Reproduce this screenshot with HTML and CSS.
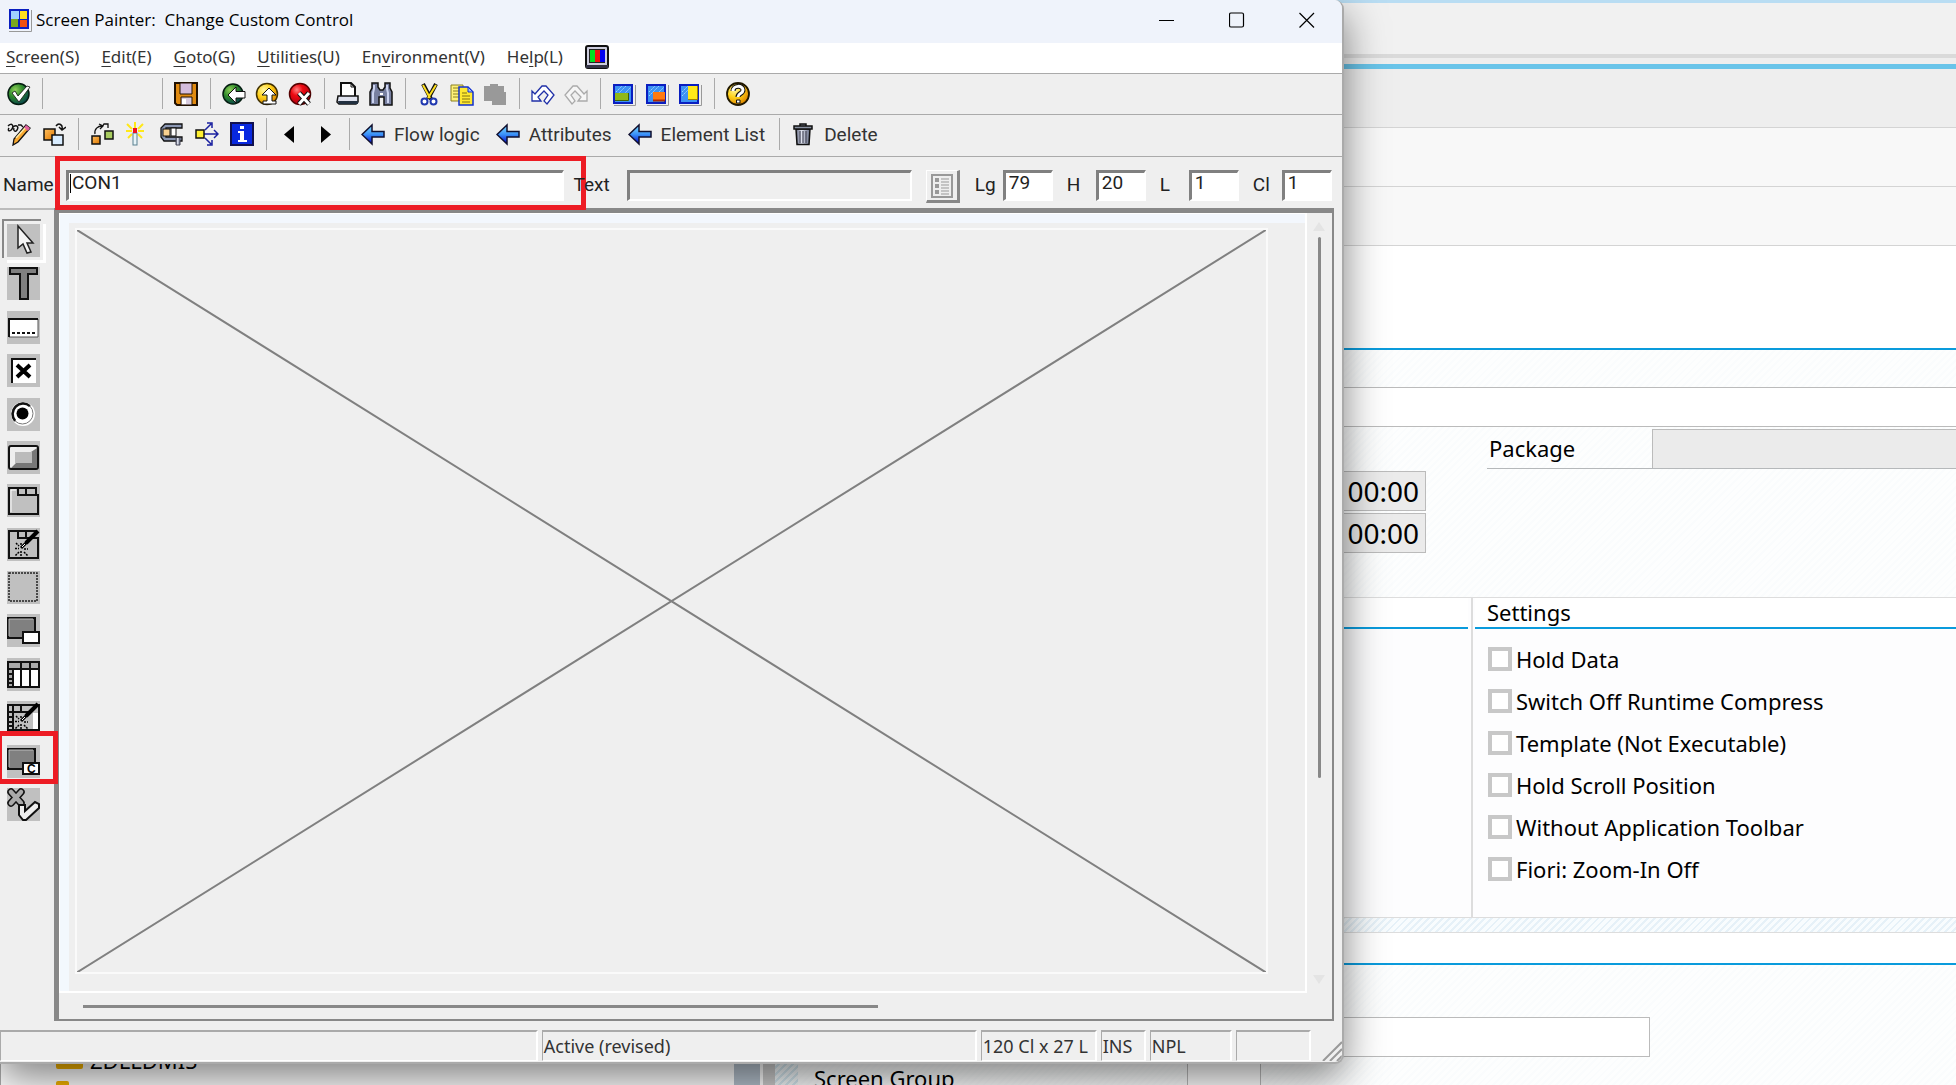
FILE: index.html
```html
<!DOCTYPE html>
<html lang="en">
<head>
<meta charset="utf-8">
<title>Screen Painter: Change Custom Control</title>
<link rel="stylesheet" href="styles.css">
</head>
<body>
<svg class="defs" aria-hidden="true">
  <defs>
    <radialGradient id="green" cx=".35" cy=".3" r=".7"><stop offset="0" stop-color="#8fd05a"/><stop offset=".5" stop-color="#2f8a2a"/><stop offset="1" stop-color="#0b4a4a"/></radialGradient>
    <radialGradient id="amber" cx=".35" cy=".3" r=".7"><stop offset="0" stop-color="#fff6a0"/><stop offset=".5" stop-color="#ffd21a"/><stop offset="1" stop-color="#e08a00"/></radialGradient>
    <radialGradient id="red" cx=".35" cy=".3" r=".7"><stop offset="0" stop-color="#ff8080"/><stop offset=".4" stop-color="#ee0a12"/><stop offset="1" stop-color="#b00010"/></radialGradient>
    <linearGradient id="blue" x1="0" y1="0" x2="0" y2="1"><stop offset="0" stop-color="#7fe0ff"/><stop offset=".5" stop-color="#3a90f8"/><stop offset="1" stop-color="#0000c8"/></linearGradient>
    <linearGradient id="orange" x1="0" y1="0" x2="1" y2="1"><stop offset="0" stop-color="#ffc060"/><stop offset="1" stop-color="#e07800"/></linearGradient>
    <linearGradient id="steel"><stop offset="0" stop-color="#5a6078"/><stop offset=".4" stop-color="#e0e4f0"/><stop offset="1" stop-color="#606880"/></linearGradient>
    <symbol id="arrow" viewBox="0 0 24 24"><path d="M1 12.500 11 3v6.500h12v5.500H11v7z" fill="url(#blue)" stroke="#101030" stroke-width="1.500"/></symbol>
    <symbol id="panel" viewBox="0 0 24 24"><path d="M2 23.500h21.500V3" fill="none" stroke="#999"/><rect x="1" y="2" width="20" height="20" fill="#0a1ec0"/><rect x="3" y="4" width="16" height="16" fill="#3c92f4"/><path d="M4 10 10 4M4 14 14 4M10 14l9-9" stroke="#a0d4ff" stroke-dasharray="2 1"/></symbol>
    <symbol id="wand" viewBox="0 0 33 33"><path d="M19 15 31 3" stroke="#000" stroke-width="4"/><path d="M14 20l6-6" stroke="#000" stroke-width="3"/><path d="m15 19 3-3" stroke="#fff"/><path d="M14 15v3M14 23v5M8 20.500h4M17 21h4M9 15l3 3M17 24l4 4M12 24l-4 4" stroke="#000" stroke-width="1.500" stroke-dasharray="2 1"/></symbol>
  </defs>
</svg>

<div class="desktop">
  <main class="backdrop">
    <div class="bar accent"></div>
    <div class="bar session"></div>
    <div class="bar ruler"></div>
    <div class="bar title-line"></div>
    <div class="bar tools dark"></div>
    <div class="bar tools"></div>
    <div class="bar tools"></div>
    <div class="work">
      <ul class="tree">
        <li><svg width="8" height="8" viewBox="0 0 8 8"><path d="M0 8h7V0z" fill="#555"/></svg><span class="folder"></span>ZDLLDMIS</li>
        <li><svg width="8" height="8"></svg><span class="folder small"></span></li>
      </ul>
      <div class="splitter"></div>
      <div class="groove"></div>
      <div class="hatch-col"></div>
      <section class="details">
        <div class="blank"></div>
        <div class="strip hatch"></div>
        <div class="strip"></div>
        <div class="columns attributes hatch">
          <div class="times">
            <input type="text" value="00:00" aria-label="Created time" readonly>
            <input type="text" value="00:00" aria-label="Changed time" readonly>
          </div>
          <div class="package">
            <label for="package">Package</label>
            <input type="text" id="package" readonly>
          </div>
        </div>
        <div class="columns groups">
          <section class="group left"><h2></h2></section>
          <section class="group right">
            <h2>Settings</h2>
            <div class="checks">
              <label><input type="checkbox">Hold Data</label>
              <label><input type="checkbox">Switch Off Runtime Compress</label>
              <label><input type="checkbox">Template (Not Executable)</label>
              <label><input type="checkbox">Hold Scroll Position</label>
              <label><input type="checkbox">Without Application Toolbar</label>
              <label><input type="checkbox">Fiori: Zoom-In Off</label>
            </div>
          </section>
        </div>
        <div class="divider"></div>
        <div class="subhead"></div>
        <div class="other hatch">
          <div class="entry"><label for="next">Next Screen</label><input id="next" class="long" type="text"></div>
          <div class="entry"><label for="grp">Screen Group</label><input id="grp" class="short" type="text"></div>
        </div>
      </section>
    </div>
  </main>

  <div class="window">
    <header class="titlebar">
      <svg width="24" height="24" viewBox="0 0 24 24"><path d="M1 23.500h22.500V2" fill="none" stroke="#999"/><rect x="1" y="1" width="20" height="20" fill="#0a1ec0"/><rect x="3" y="3" width="8" height="8" fill="#9fd0ff"/><rect x="12" y="3" width="7" height="8" fill="#ffe020"/><rect x="3" y="11" width="7" height="8" fill="#7aa820"/><rect x="12" y="12" width="7" height="7" fill="#f05010"/></svg>
      <h1>Screen Painter:&nbsp; Change Custom Control</h1>
      <div class="controls">
        <button type="button" aria-label="Minimize"><svg width="16" height="16"><path d="M0 8.500h15" stroke="#000"/></svg></button>
        <button type="button" aria-label="Maximize"><svg width="16" height="16"><rect x=".5" y="1" width="14" height="14" rx="1.500" fill="none" stroke="#000" stroke-width="1.200"/></svg></button>
        <button type="button" aria-label="Close"><svg width="16" height="16"><path d="m.5 1 14.500 14.500M15 1 .5 15.500" stroke="#000" stroke-width="1.200"/></svg></button>
      </div>
    </header>
    <nav class="menubar">
      <button type="button"><u>S</u>creen(S)</button>
      <button type="button"><u>E</u>dit(E)</button>
      <button type="button"><u>G</u>oto(G)</button>
      <button type="button"><u>U</u>tilities(U)</button>
      <button type="button">En<u>v</u>ironment(V)</button>
      <button type="button">He<u>l</u>p(L)</button>
      <svg width="24" height="24" viewBox="0 0 24 24"><rect x="1" y="1" width="22" height="22" rx="2" fill="#ccd" stroke="#111" stroke-width="2"/><path d="M1 20h22v3H1z" fill="#334"/><rect x="4" y="4" width="16" height="14" fill="#222"/><rect x="5" y="5" width="6" height="12" fill="#00e020"/><rect x="10" y="5" width="6" height="12" fill="#f01010"/><rect x="15" y="5" width="5" height="12" fill="#0000f0"/></svg>
    </nav>

    <div class="toolbar">
      <div class="group-tools first">
        <button type="button" aria-label="Enter"><svg viewBox="0 0 24 24"><circle cx="11.500" cy="12" r="10.500" fill="url(#green)" stroke="#041c10" stroke-width="1.500"/><path d="m5 11 3-2 3 5 9-10 3 1-11 15z" fill="#fff" stroke="#111" stroke-width=".8"/></svg></button>
      </div>
      <div class="group-tools command"></div>
      <div class="group-tools">
        <button type="button" aria-label="Save"><svg viewBox="0 0 24 24"><path d="M1 1h22v22H3l-2-2z" fill="#e08a10" stroke="#201000" stroke-width="2"/><path d="M6 1h12v11H6z" fill="#d4bcdc" stroke="#201000"/><path d="M7 15h11v8H7z" fill="#d8cce0" stroke="#201000"/><path d="M8 17h4v5H8z" fill="#fff"/></svg></button>
      </div>
      <div class="group-tools">
        <button type="button" aria-label="Back"><svg viewBox="0 0 24 24"><circle cx="11" cy="12" r="10" fill="url(#green)" stroke="#041c10" stroke-width="1.500"/><path d="M6 13 14 5v4.500h9v6.500h-9v5z" fill="#fff" stroke="#111"/></svg></button>
        <button type="button" aria-label="Exit"><svg viewBox="0 0 24 24"><circle cx="12" cy="12" r="10.500" fill="url(#amber)" stroke="#403000" stroke-width="1.500"/><path d="M14 6l7 7h-4v6h4v3H8v-3h4v-6H7z" fill="#fff" stroke="#111"/></svg></button>
        <button type="button" aria-label="Cancel"><svg viewBox="0 0 24 24"><circle cx="12" cy="12" r="10.500" fill="url(#red)" stroke="#500" stroke-width="1.500"/><path d="m11 11 10 11M21 11 11 22" stroke="#111" stroke-width="5"/><path d="m11 11 10 11M21 11 11 22" stroke="#fff" stroke-width="3"/></svg></button>
      </div>
      <div class="group-tools">
        <button type="button" aria-label="Print"><svg viewBox="0 0 24 24"><path d="M5 14V1h10l4 4v9" fill="#fff" stroke="#111" stroke-width="2"/><path d="M15 1v4h4" fill="none" stroke="#111"/><path d="M2 14h20v6l-2 2H3l-2-2z" fill="#dfe2ee" stroke="#111" stroke-width="1.500"/><path d="M2 19h20v3H3z" fill="#223040"/></svg></button>
        <button type="button" aria-label="Find"><svg viewBox="0 0 24 24"><path d="M3 1h6v4l2 3h3l2-3V1h5v5l2 4v13h-8v-8h-5v8H1V10l2-4z" fill="#7880a0" stroke="#111" stroke-width="1.500"/><path d="M5 3v4L4 11v10M18 3v4l1 4v10" fill="none" stroke="#ccd4f0" stroke-width="2"/><path d="M11 11h3v2h-3z" fill="#fff"/></svg></button>
      </div>
      <div class="group-tools">
        <button type="button" aria-label="Cut"><svg viewBox="0 0 24 24"><path d="m6 2 8 15M19 2l-8 15" stroke="#111" stroke-width="4"/><path d="m6 3 7 13M19 3l-8 13" stroke="#ffe020" stroke-width="2"/><circle cx="7.500" cy="19.500" r="3" fill="#fff" stroke="#2038b0" stroke-width="2"/><circle cx="16.500" cy="19.500" r="3" fill="#fff" stroke="#2038b0" stroke-width="2"/></svg></button>
        <button type="button" aria-label="Copy"><svg viewBox="0 0 24 24"><path d="M1 3h12v16H1z" fill="#fff27a" stroke="#8a8020"/><path d="M3 6h6M3 9h6M3 12h6M3 15h6" stroke="#8a8020"/><path d="M9 5h9l5 5v13H9z" fill="#ffe830" stroke="#1030d0" stroke-width="1.500"/><path d="M18 5v5h5z" fill="#a0b8ff" stroke="#1030d0"/><path d="M12 11h5M12 14h8M12 17h8M12 20h8" stroke="#807010"/></svg></button>
        <button type="button" aria-label="Paste" disabled><svg viewBox="0 0 24 24"><path d="M2 4h5V2h8v2h6v6h2v13H9v-4H1V4z" fill="#999"/></svg></button>
      </div>
      <div class="group-tools">
        <button type="button" aria-label="Undo"><svg viewBox="0 0 24 24"><path d="M1 19V9l3 3 7-8h4l8 9-7 9-3-3 4-6-4-4-6 6 3 4z" fill="#fff" stroke="#2030a8" stroke-width="1.300"/></svg></button>
        <button type="button" aria-label="Redo" disabled><svg viewBox="0 0 24 24"><path d="M23 19V9l-3 3-7-8H9L1 13l7 9 3-3-4-6 4-4 6 6-3 4z" fill="#f6f6f6" stroke="#aaa" stroke-width="1.300"/></svg></button>
      </div>
      <div class="group-tools">
        <button type="button" aria-label="Screen layout"><svg viewBox="0 0 24 24"><use href="#panel"/><path d="M3 11h13v8H3z" fill="#90b818"/><path d="M3 18.500h13.500V11" stroke="#406000" fill="none"/></svg></button>
        <button type="button" aria-label="Dialog layout"><svg viewBox="0 0 24 24"><use href="#panel"/><path d="M8 10h12v9H8z" fill="#ff7a10"/><path d="M8 18.500h12" stroke="#b02800" stroke-width="2"/></svg></button>
        <button type="button" aria-label="Side layout"><svg viewBox="0 0 24 24"><use href="#panel"/><path d="M10 4h9v13h-9z" fill="#ffe818"/><path d="M10 17.500h9.500V4" stroke="#a08000" fill="none"/></svg></button>
      </div>
      <div class="group-tools">
        <button type="button" aria-label="Help"><svg viewBox="0 0 24 24"><circle cx="12" cy="12" r="11" fill="url(#amber)" stroke="#201800" stroke-width="1.800"/><path d="M7 9c0-6 10-6 10-1 0 4-5 3-5 7" fill="none" stroke="#111" stroke-width="5"/><path d="M7 9c0-6 10-6 10-1 0 4-5 3-5 7" fill="none" stroke="#fff" stroke-width="3"/><path d="M10.500 18h3.500v3h-3.500z" fill="#fff" stroke="#111"/></svg></button>
      </div>
    </div>

    <div class="toolbar second">
      <div class="group-tools first">
        <button type="button" aria-label="Display and change"><svg viewBox="0 0 24 24"><path d="M1 4c4-4 6 0 4 3S0 9 2 6M6 5c4-3 6 0 4 3S6 8 7 6M11 3h3l2 2" fill="none" stroke="#111" stroke-width="1.400"/><path d="M19 3l4 3L11 20l-5 3 1-6z" fill="#f8a830" stroke="#111" stroke-width="1.300"/><path d="m19 3 4 3-2 3-4-3z" fill="#e060a0"/><path d="m9 16 9-10" stroke="#ffe8a0" stroke-width="1.500"/></svg></button>
        <button type="button" aria-label="Other object"><svg viewBox="0 0 24 24"><rect x="2" y="7" width="11" height="11" fill="url(#orange)" stroke="#111" stroke-width="1.500"/><rect x="10" y="13" width="11" height="10" fill="#d8ecff" stroke="#111" stroke-width="1.500"/><path d="M14 4c3-4 7-1 6 3m-3-2 3 3 4-3" fill="none" stroke="#111" stroke-width="1.500"/></svg></button>
      </div>
      <div class="group-tools">
        <button type="button" aria-label="Check"><svg viewBox="0 0 24 24"><rect x="2" y="14" width="8" height="8" fill="url(#orange)" stroke="#111" stroke-width="1.500"/><rect x="15" y="9" width="8" height="8" fill="#a8cc60" stroke="#111" stroke-width="1.500"/><path d="M5 12C4 7 8 4 12 4M9 2l4 2-3 3M18 6V2h-4l-2 3" fill="none" stroke="#111" stroke-width="1.300"/></svg></button>
        <button type="button" aria-label="Activate"><svg viewBox="0 0 24 24"><path d="M10 0v6M2 2l5 5M18 2l-5 5M1 9h6M13 9h6M3 16l4-4M17 16l-4-4" stroke="#ffe818" stroke-width="2"/><rect x="8" y="11" width="4" height="12" fill="#e8f4f8" stroke="#5a8090"/><rect x="8" y="6" width="4" height="5" fill="#f01020"/></svg></button>
        <button type="button" aria-label="Test"><svg viewBox="0 0 24 24"><path d="M5 2h17v4H6v9h16v4H4l-3-4V6z" fill="#8c98b4" stroke="#111" stroke-width="1.300"/><rect x="3" y="7" width="7" height="7" fill="#f8d090" stroke="#111"/><rect x="11" y="6" width="5" height="8" fill="#fff" stroke="#111"/><path d="M16 16v7h4v-7" fill="url(#steel)" stroke="#445"/></svg></button>
        <button type="button" aria-label="Where used"><svg viewBox="0 0 24 24"><path d="M8 12h15M10 8l6-6M10 16l6 6M19 8l4 4-4 4M12 1h5v5M12 23h5v-5" fill="none" stroke="#1a20a0" stroke-width="1.500"/><rect x="1" y="8" width="8" height="8" fill="#fff030" stroke="#111" stroke-width="1.500"/></svg></button>
        <button type="button" aria-label="Information"><svg viewBox="0 0 24 24"><rect x="1" y="1" width="22" height="22" fill="#0828e0" stroke="#101050" stroke-width="2"/><path d="M10 4h4v3h-4zM8 9h6v9h3v2H8v-2h2v-7H8z" fill="#fff"/></svg></button>
      </div>
      <div class="group-tools">
        <button type="button" aria-label="Previous"><svg viewBox="0 0 24 24"><path d="M16 4v17L6 12.500z"/></svg></button>
        <button type="button" aria-label="Next"><svg viewBox="0 0 24 24"><path d="M8 4v17l10-8.500z"/></svg></button>
      </div>
      <div class="group-tools labelled">
        <button type="button"><svg viewBox="0 0 24 24"><use href="#arrow"/></svg>Flow logic</button>
        <button type="button"><svg viewBox="0 0 24 24"><use href="#arrow"/></svg>Attributes</button>
        <button type="button"><svg viewBox="0 0 24 24"><use href="#arrow"/></svg>Element List</button>
      </div>
      <div class="group-tools labelled">
        <button type="button"><svg viewBox="0 0 24 24"><path d="M5 7h14l-1 15.500H6z" fill="url(#steel)" stroke="#111" stroke-width="1.500"/><path d="M9 9v12M12 9v12M15 9v12" stroke="#334"/><path d="M3 4h18v3H3zM9 4V2h6v2" fill="#8890a0" stroke="#111" stroke-width="1.500"/></svg>Delete</button>
      </div>
    </div>

    <div class="fields">
      <div class="field name">
        <label for="name">Name</label><input id="name" type="text" value="CON1">
        <span class="caret"></span><span class="mark"></span>
      </div>
      <div class="field text"><label for="text">Text</label><input id="text" type="text" disabled></div>
      <button class="list" type="button" aria-label="Choose" disabled><svg width="22" height="24" viewBox="0 0 22 24"><path d="M1 1h20v22H1z" fill="#eee" stroke="#999" stroke-width="2"/><path d="M4 6h4M4 12h4M4 18h4" stroke="#999" stroke-width="4"/><path d="M10 5h8M10 8h8M10 11h8M10 14h8M10 17h8M10 20h8" stroke="#999"/></svg></button>
      <div class="field size"><label for="lg">Lg</label><input id="lg" type="text" value="79"></div>
      <div class="field size"><label for="h">H</label><input id="h" type="text" value="20"></div>
      <div class="field size"><label for="l">L</label><input id="l" type="text" value="1"></div>
      <div class="field size"><label for="cl">Cl</label><input id="cl" type="text" value="1"></div>
    </div>

    <div class="editor">
      <div class="palette">
        <div class="tool-list">
          <button type="button" class="pressed" aria-label="Select"><svg viewBox="0 0 33 33"><path d="M11 2v22l5-4 4 9 4-1-4-9h6z" fill="#f4f4f4" stroke="#222" stroke-width="1.500"/></svg></button>
          <button type="button" aria-label="Text field"><svg viewBox="0 0 33 33"><path d="M3 1h27v6h-9v25h-8V7H3z" fill="#808080" stroke="#111" stroke-width="2"/></svg></button>
          <button type="button" aria-label="Input field"><svg viewBox="0 0 33 33"><path d="M2 8h29v18H2z" fill="#fff" stroke="#555"/><path d="M2 26V8h29" fill="none" stroke="#111" stroke-width="2"/><path d="M5 22h25" stroke="#111" stroke-width="2" stroke-dasharray="3 2"/></svg></button>
          <button type="button" aria-label="Checkbox"><svg viewBox="0 0 33 33"><path d="M5 5h24v24H5z" fill="#fff"/><path d="M5 29V5h24" fill="none" stroke="#111" stroke-width="2"/><path d="m10 11 13 12M23 11 10 23" stroke="#000" stroke-width="4"/></svg></button>
          <button type="button" aria-label="Radio button"><svg viewBox="0 0 33 33"><circle cx="16" cy="16" r="12" fill="#fff"/><circle cx="15.500" cy="15.500" r="10.500" fill="#fff" stroke="#777"/><path d="M8.100 22.900A10.500 10.500 0 0 1 22.900 8.100" fill="none" stroke="#111" stroke-width="2.500"/><circle cx="15.500" cy="15.500" r="6" fill="#000"/></svg></button>
          <button type="button" aria-label="Push button"><svg viewBox="0 0 33 33"><rect x="2" y="5" width="29" height="23" rx="2" fill="#eee" stroke="#111" stroke-width="2"/><path d="M30 7v20H4l5-5h15V11z" fill="#777"/><path d="M8 11h17v11H8z" fill="#bbb"/></svg></button>
          <button type="button" aria-label="Tabstrip"><svg viewBox="0 0 33 33"><path d="M2 30V4h9v7h20v19z" fill="#c0c0c0" stroke="#111" stroke-width="2"/><path d="M11 4h8v7M20 4h9v7" fill="none" stroke="#111" stroke-width="2"/><path d="M4 28V6h5" fill="none" stroke="#fff"/></svg></button>
          <button type="button" aria-label="Tabstrip wizard"><svg viewBox="0 0 33 33"><path d="M2 30V3h9v7h20v20z" fill="#c0c0c0" stroke="#111" stroke-width="2"/><path d="M11 3h8v7M20 3h9" fill="none" stroke="#111" stroke-width="2"/><use href="#wand"/></svg></button>
          <button type="button" aria-label="Box"><svg viewBox="0 0 33 33"><path d="M2 2h28v28H2z" fill="none" stroke="#222" stroke-width="1.500" stroke-dasharray="2 1"/></svg></button>
          <button type="button" aria-label="Subscreen"><svg viewBox="0 0 33 33"><path d="M1 4h27v20H1z" fill="#808080" stroke="#111" stroke-width="2"/><path d="M2 22V5h24" fill="none" stroke="#bbb"/><path d="M16 18h16v11H16z" fill="#fff" stroke="#111" stroke-width="2"/></svg></button>
          <button type="button" aria-label="Table control"><svg viewBox="0 0 33 33"><path d="M1 4h31v25H1z" fill="#fff" stroke="#111" stroke-width="2"/><path d="M1 4h31v7H6v18H1z" fill="#aaa" stroke="#111" stroke-width="2"/><path d="M14 4v25M23 4v25M1 11h5M1 16h5M1 21h5M1 25h5" stroke="#111" stroke-width="2"/></svg></button>
          <button type="button" aria-label="Table wizard"><svg viewBox="0 0 33 33"><path d="M1 4h31v25H1z" fill="#c0c0c0" stroke="#111" stroke-width="2"/><path d="M6 4v25M1 11h22M14 4v7M1 16h5M1 21h5M1 25h5" stroke="#111" stroke-width="2"/><path d="M26 12h5v16h-5z" fill="#fff"/><use href="#wand"/></svg></button>
          <button type="button" class="marked" aria-label="Custom control"><svg viewBox="0 0 33 33"><path d="M1 4h27v20H1z" fill="#808080" stroke="#111" stroke-width="2"/><path d="M2 22V5h24" fill="none" stroke="#bbb"/><path d="M16 18h16v11H16z" fill="#fff" stroke="#111" stroke-width="2"/><text x="20" y="28" class="glyph">C</text></svg><span class="mark"></span></button>
          <button type="button" aria-label="Status icon"><svg viewBox="0 0 33 33"><path d="m4 4 10 11M14 4 4 15" stroke="#111" stroke-width="7.500" stroke-linecap="round"/><path d="m4 4 10 11M14 4 4 15" stroke="#aaa" stroke-width="4.500" stroke-linecap="round"/><path d="M12 17h6v6l10-9 4 2v4L19 32h-3l-4-5z" fill="#eee" stroke="#111" stroke-width="2"/></svg></button>
        </div>
      </div>
      <div class="frame">
        <div class="canvas">
          <div class="control">
            <svg viewBox="0 0 100 100" preserveAspectRatio="none"><path d="M0 0 100 100M100 0 0 100" stroke="#808080" stroke-width="2" vector-effect="non-scaling-stroke"/></svg>
          </div>
        </div>
        <div class="vscroll"><i class="up"></i><b></b><i class="down"></i></div>
        <div class="hscroll"><b></b></div>
      </div>
    </div>

    <footer class="status">
      <span class="fill"></span>
      <span class="state">Active (revised)</span>
      <span class="dims">120 Cl x 27 L</span>
      <span class="ins">INS</span>
      <span class="npl">NPL</span>
      <span class="spare"></span>
      <svg width="20" height="20"><path d="M1 20 20 1M8 20 20 8M15 20l5-5" stroke="#999" stroke-width="2"/></svg>
    </footer>
  </div>
</div>
</body>
</html>
```
FILE: styles.css
```css
* { box-sizing: border-box; }

body {
  margin: 0;
  background: #fff;
  color: #000;
  font-family: "Noto Sans", "Open Sans", sans-serif;
}

button, input, h1, h2, ul { margin: 0; padding: 0; font: inherit; color: inherit; }
button { background: none; border: 0; }
input { min-width: 0; border-radius: 0; outline: 0; }
svg { display: block; flex: none; fill: none; }
.toolbar svg path:not([fill]):not([stroke]) { fill: #000; }
.glyph { fill: #000; font: 700 12px "Liberation Sans", sans-serif; }
.defs { position: absolute; width: 0; height: 0; }

.desktop { position: relative; height: 100vh; overflow: hidden; }

/* Repository browser behind the painter window */
.backdrop { display: flex; flex-direction: column; min-height: 100%; font-size: 22px; }
.accent { height: 3px; background: #b9ddf3; }
.session { height: 51px; background: #f1f1f1; }
.ruler { height: 4px; background: #dadada; }
.title-line { height: 11px; background: #eee; border-bottom: 5px solid #69c4e9; }
.tools { height: 59px; background: #f8f8f8; border-bottom: 1px solid #d4d4d4; }
.tools.dark { background: #eee; }
.work { display: flex; flex: 1; }

.tree {
  display: flex; flex-direction: column; justify-content: flex-end;
  width: 734px; height: 859px; border-left: 1px solid #aaa; list-style: none;
}
.tree li { display: flex; align-items: center; gap: 7px; height: 30px; padding-left: 40px; white-space: nowrap; }
.folder { width: 27px; height: 18px; border-radius: 2px; background: #f5b400; }
.folder.small { width: 13px; }
.splitter { width: 26px; background: #b4c0cc; }
.groove { width: 12px; margin-left: 3px; background: #ccc; }
.hatch-col { width: 23px; background: repeating-linear-gradient(135deg, #d8eaf2 0 2px, #f4fafc 2px 5px); }

.details { display: flex; flex: 1; flex-direction: column; min-width: 0; }
.hatch { background: repeating-linear-gradient(135deg, #fafcfd 0 2px, #fdfefe 2px 5px); }
.blank { height: 104px; border-bottom: 2px solid #0a9bdc; }
.strip { height: 38px; border-bottom: 1px solid #bbb; }
.strip + .strip { height: 39px; }
.columns { display: grid; grid-template-columns: minmax(0, 674fr) minmax(0, 484fr); }
.attributes { height: 170px; }
.times { display: flex; flex-direction: column; align-items: flex-end; gap: 2px; padding: 44px 46px 0 0; }
.times input {
  width: 128px; height: 40px; padding-right: 6px; background: #ebebeb; border: 1px solid #bbb;
  font-size: 28px; line-height: 38px; text-align: right;
}
.package { display: flex; align-self: start; height: 40px; margin: 2px 0 0 15px; border-bottom: 1px solid #b5b8ba; }
.package label { width: 165px; padding-left: 2px; line-height: 38px; }
.package input { flex: 1; background: #ebebeb; border: 1px solid #bbb; border-width: 1px 0 0 1px; }

.groups { height: 320px; }
.group { border-top: 1px solid #ddd; background: #fdfdfe; }
.group h2 { height: 31px; border-bottom: 2px solid #0a9bdc; background: #fff; font-size: 22px; font-weight: 400; line-height: 28px; }
.group.left { border-right: 1px solid #ddd; padding-right: 3px; }
.group.right { border-left: 1px solid #ddd; padding-left: 2px; }
.group.right h2 { padding-left: 12px; }
.checks { display: flex; flex-direction: column; padding: 9px 0 0 13px; }
.checks label { display: flex; align-items: center; gap: 4px; height: 42px; white-space: nowrap; }
.checks input { width: 24px; height: 24px; margin: 0; appearance: none; border: 4px solid #c8c8c8; background: #fff; }

.divider {
  height: 16px; border: 1px solid #ddd; border-width: 1px 0;
  background: repeating-linear-gradient(135deg, #e6f1f8 0 2px, #f8fcfe 2px 5px);
}
.subhead { height: 32px; border-bottom: 2px solid #0a9bdc; background: #fff; }
.other { display: flex; flex: 1; flex-direction: column; gap: 2px; padding-top: 52px; }
.entry { display: flex; flex: none; height: 40px; }
.entry label { width: 389px; padding-left: 16px; line-height: 38px; }
.entry input { background: #fff; border: 1px solid #bbb; }
.long { width: 463px; }
.short { width: 74px; }

/* Painter window */
.window {
  position: absolute; top: 0; left: 0; width: 68.7%; height: 98.1%;
  display: flex; flex-direction: column; overflow: hidden;
  background: #efefef; border: solid #aaa; border-width: 0 2px 2px 0; border-radius: 0 9px 9px 0;
  box-shadow: 0 14px 40px rgba(0, 0, 0, .5);
}

.titlebar { display: flex; flex: none; align-items: center; height: 43px; padding: 0 0 4px 8px; gap: 4px; background: #eff3fb; }
.titlebar h1 { flex: 1; font-family: "Open Sans", sans-serif; font-size: 17px; font-weight: 400; line-height: 24px; }
.controls { display: flex; height: 100%; }
.controls button { display: grid; place-items: center; width: 70px; }

.menubar { display: flex; flex: none; align-items: center; gap: 22px; height: 31px; padding: 0 6px 3px; background: #fff; border-bottom: 1px solid #aaa; font-size: 17px; line-height: 24px; color: #333; }
.menubar u { text-underline-offset: 3px; }

.toolbar { display: flex; flex: none; height: 41px; border-bottom: 1px solid #aaa; font-family: Roboto, sans-serif; font-size: 19px; }
.toolbar.second { height: 42px; }
.group-tools { display: flex; align-items: center; gap: 9px; margin: 4px 0 5px; padding: 0 12px 0 11px; border-left: 1px solid #aaa; }
.group-tools.first { padding: 0 11px 0 7px; border-left: 0; }
.group-tools.command { width: 120px; }
.group-tools button { display: flex; align-items: center; gap: 9px; color: #333; white-space: nowrap; }
.group-tools svg { width: 24px; height: 24px; }
.second .group-tools { gap: 11px; margin: 3px 0 6px; }
.second .group-tools.first { padding-right: 12px; }
.second .group-tools.labelled { gap: 16px; padding-right: 14px; }

.fields { display: flex; flex: none; align-items: flex-start; height: 51px; padding: 13px 10px 0 3px; font-family: Roboto, sans-serif; font-size: 19px; color: #222; }
.field { position: relative; display: flex; }
.field label { line-height: 29px; }
.field input { width: 50px; height: 31px; padding: 0 3px 8px; border: solid; border-width: 3px 2px 2px 3px; border-color: #808080 #fff #fff #808080; background: #fff; line-height: 18px; }
.field.name { flex: 561; }
.field.name label { width: 63px; }
.field.name input { flex: 1; }
.caret { position: absolute; left: 67px; top: 4px; width: 1px; height: 19px; background: #000; }
.field.name .mark { inset: -14px -22px -9px 52px; }
.mark { position: absolute; border: 5px solid #ed1c24; }
.field.text { flex: 338; margin-left: 9px; }
.field.text label { width: 54px; }
.field.text input { flex: 1; background: #efefef; }
.list { display: grid; place-items: center; width: 34px; height: 33px; margin: 0 15px 0 14px; border: solid; border-width: 1px 3px 3px 1px; border-color: #fff #888 #888 #fff; }
.field.size label { width: 28px; }
.field.size + .size { margin-left: 14px; }
.field.size + .size label { width: 29px; }

.editor { display: flex; flex: 1; min-height: 0; padding-right: 8px; }
.palette { flex: none; width: 54px; padding: 14px 0 0 7px; border-top: 2px solid #bbb; }
.tool-list { display: flex; flex-direction: column; justify-content: space-between; height: 597px; }
.tool-list button { position: relative; width: 33px; height: 33px; background: #c0c0c0; }
.pressed { box-shadow: 0 0 0 3px #efefef, 3px 3px 0 3px #fff, -2px -2px 0 3px #888; }
.marked .mark { inset: -14px -18px -6px -10px; z-index: 1; }

.frame {
  display: grid; flex: 1; grid-template: minmax(0, 1fr) 26px / minmax(0, 1fr) 25px; min-width: 0;
  border: solid #888; border-width: 5px 2px 2px 5px; background: #efefef;
}
.canvas { padding: 14px 37px 17px 15px; border: solid #fff; border-width: 1px 2px 2px 1px; background: linear-gradient(90deg, #f3f8fd 0 9px, transparent 9px), linear-gradient(#f3f7fd 0 9px, transparent 9px); }
.control { height: 100%; border: 2px solid #fafafa; background: #efefef; }
.control svg { width: 100%; height: 100%; }
.vscroll { display: flex; flex-direction: column; align-items: center; padding: 9px 0; }
.vscroll b { flex: none; width: 3px; height: 71%; margin-top: 6px; border-radius: 2px; background: #888; }
.vscroll i { border: solid transparent; border-width: 0 6px; }
.vscroll .up { border-bottom: 9px solid #e4e4e4; }
.vscroll .down { margin-top: auto; border-top: 9px solid #e4e4e4; }
.hscroll { display: flex; align-items: center; padding-left: 24px; }
.hscroll b { width: 65%; height: 3px; background: #888; }

.status { display: flex; flex: none; height: 41px; gap: 4px; padding: 9px 0 1px; font-size: 18px; line-height: 28px; color: #333; white-space: nowrap; }
.status span { padding-left: 1px; border: solid; border-width: 2px 2px 1px 1px; border-color: #aaa #fff #fff #aaa; }
.fill { flex: 540; }
.state { flex: 436; }
.dims { width: 116px; }
.ins { width: 45px; }
.npl { width: 82px; }
.spare { width: 75px; }
.status svg { align-self: end; margin-left: 7px; }
```
